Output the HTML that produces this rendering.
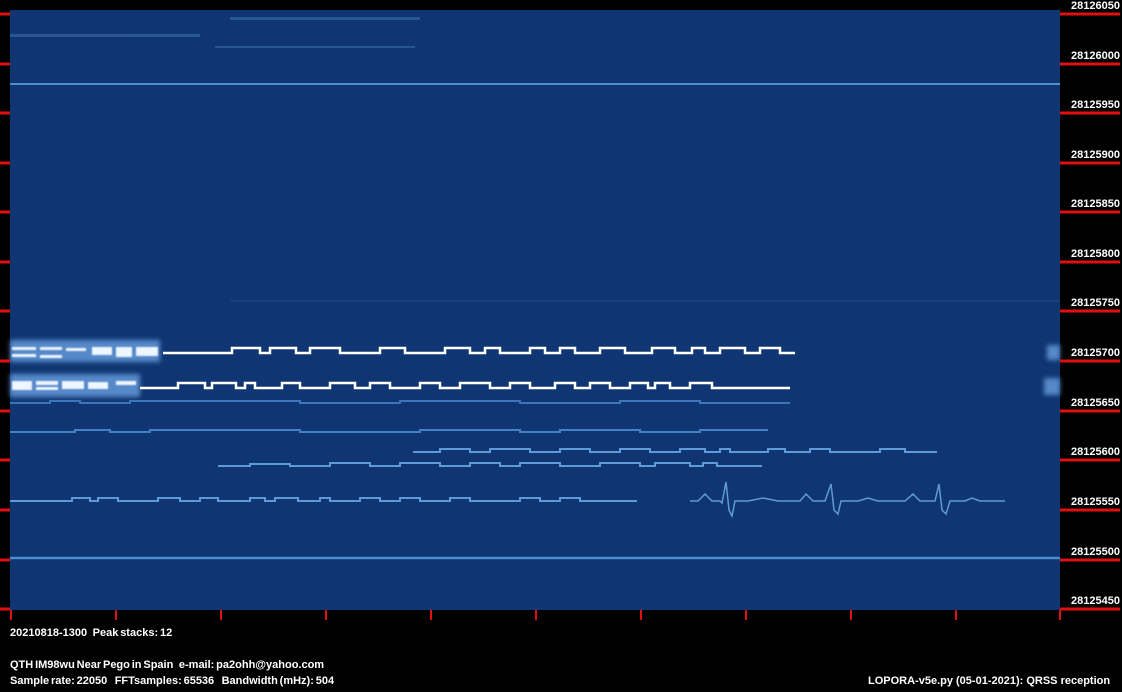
<!DOCTYPE html>
<html><head><meta charset="utf-8"><style>
html,body{margin:0;padding:0;background:#000;width:1122px;height:692px;overflow:hidden}
.t{position:absolute;color:#fff;font:bold 11px "Liberation Sans",sans-serif;white-space:pre;letter-spacing:0}
.w{word-spacing:-1.2px}
</style></head><body>
<svg width="1122" height="692" style="position:absolute;left:0;top:0">
<defs>
<filter id="b"><feGaussianBlur stdDeviation="0.9"/></filter>
<filter id="b2"><feGaussianBlur stdDeviation="2.5"/></filter>
</defs>
<rect x="10" y="10" width="1050" height="600" fill="#0f3572"/>
<g fill="#2f5e9c" opacity="0.8">
<rect x="10" y="34" width="190" height="3"/><rect x="215" y="46" width="200" height="2"/><rect x="230" y="17" width="190" height="3"/>
</g>
<line x1="10" y1="84" x2="1060" y2="84" stroke="#4d8ed0" stroke-width="2"/>
<line x1="10" y1="558" x2="1060" y2="558" stroke="#4d8ed0" stroke-width="2.5"/>
<line x1="230" y1="301" x2="1060" y2="301" stroke="#1e4a88" stroke-width="1"/>
<g filter="url(#b2)" fill="#6ea6e6" opacity="0.75">
<rect x="10" y="340" width="150" height="22"/><rect x="10" y="374" width="130" height="23"/>
<rect x="1047" y="345" width="13" height="15"/><rect x="1044" y="378" width="16" height="17"/>
</g>
<g fill="#eef6ff" filter="url(#b)">
<rect x="12" y="347" width="24" height="3"/><rect x="12" y="354" width="24" height="3"/><rect x="40" y="347" width="22" height="3"/><rect x="40" y="355" width="22" height="3"/><rect x="66" y="348" width="20" height="3"/><rect x="92" y="347" width="20" height="8"/><rect x="116" y="347" width="16" height="10"/><rect x="136" y="347" width="22" height="9"/>
<rect x="12" y="381" width="20" height="9"/><rect x="36" y="381" width="22" height="4"/><rect x="36" y="387" width="22" height="3"/><rect x="62" y="381" width="22" height="8"/><rect x="88" y="382" width="20" height="7"/><rect x="116" y="381" width="20" height="4"/>
</g>
<g fill="none" stroke="#ffffff" stroke-width="2.5">
<path d="M163 353H232V348H260V353H270V348H296V353H310V348H340V353H380V348H405V353H445V348H470V353H485V348H500V353H530V348H545V353H560V348H575V353H600V348H625V353H652V348H675V353H692V348H705V353H720V348H745V353H760V348H780V353H795"/>
<path d="M140 388H178V383H205V388H212V383H236V388H245V383H255V388H282V383H300V388H330V383H355V388H370V383H390V388H420V383H440V388H460V383H490V388H510V383H530V388H555V383H575V388H590V383H610V388H630V383H648V388H655V383H670V388H690V383H712V388H790"/>
</g>
<g fill="none" stroke="#5e9ad8" stroke-width="2">
<path d="M10 403H50V401H80V403H130V401H300V403H400V401H520V403H620V401H700V403H790" stroke="#3e74b8"/>
<path d="M10 432H75V430H110V432H150V430H300V432H420V430H520V432H560V430H640V432H700V430H768" stroke="#4680c4"/>
<path d="M413 452H440V449H470V452H490V449H530V452H560V449H590V452H620V449H650V452H680V449H705V452H720V449H730V452H768V449H785V452H810V449H830V452H880V449H905V452H937"/>
<path d="M218 466H250V464H290V466H330V463H370V466H400V463H440V466H470V463H500V466H520V463H560V466H600V463H640V466H655V463H690V466H703V463H717V466H762"/>
<path d="M10 501H72V498H90V501H98V498H118V501H158V498H180V501H200V498H218V501H250V498H265V501H275V498H298V501H320V498H330V501H360V498H380V501H400V498H420V501H450V498H470V501H520V498H540V501H560V498H580V501H637"/>
<path d="M690 501H698L705 494L712 501H720L722 503L726 482L729 510L732 516L735 501H748L763 498L778 501H800L806 494L813 501H825L831 484L834 510L838 514L841 501H858L868 498L878 501H905L913 494L920 501H935L939 484L942 510L946 514L950 501H965L972 498L980 501H1005" stroke="#5f9ad6" stroke-width="1.5"/>
</g>
<g stroke="#e01010" stroke-width="3">
<path d="M1060 14H1120M1060 64H1120M1060 113H1120M1060 163H1120M1060 212H1120M1060 262H1120M1060 311H1120M1060 361H1120M1060 411H1120M1060 460H1120M1060 510H1120M1060 560H1120M1060 609H1120"/>
<path d="M0 14H10M0 64H10M0 113H10M0 163H10M0 212H10M0 262H10M0 311H10M0 361H10M0 411H10M0 460H10M0 510H10M0 560H10M0 609H10"/>
<path d="M11 610V620M116 610V620M221 610V620M326 610V620M431 610V620M536 610V620M641 610V620M746 610V620M851 610V620M956 610V620M1060 610V620" stroke-width="2"/>
</g>
</svg>
<div class="t" style="left:1071px;top:0px">28126050</div>
<div class="t" style="left:1071px;top:50px">28126000</div>
<div class="t" style="left:1071px;top:99px">28125950</div>
<div class="t" style="left:1071px;top:149px">28125900</div>
<div class="t" style="left:1071px;top:198px">28125850</div>
<div class="t" style="left:1071px;top:248px">28125800</div>
<div class="t" style="left:1071px;top:297px">28125750</div>
<div class="t" style="left:1071px;top:347px">28125700</div>
<div class="t" style="left:1071px;top:397px">28125650</div>
<div class="t" style="left:1071px;top:446px">28125600</div>
<div class="t" style="left:1071px;top:496px">28125550</div>
<div class="t" style="left:1071px;top:546px">28125500</div>
<div class="t" style="left:1071px;top:595px">28125450</div>
<div class="t w" style="left:10px;top:627px">20210818-1300   Peak stacks: 12</div>
<div class="t w" style="left:10px;top:659px">QTH IM98wu Near Pego in Spain   e-mail: pa2ohh@yahoo.com</div>
<div class="t w" style="left:10px;top:675px">Sample rate: 22050    FFTsamples: 65536    Bandwidth (mHz): 504</div>
<div class="t" style="left:868px;top:675px">LOPORA-v5e.py (05-01-2021): QRSS reception</div>
</body></html>
